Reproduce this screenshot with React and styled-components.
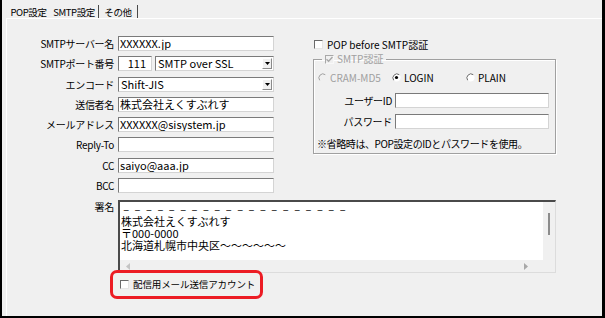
import React from "react"
import styled, { createGlobalStyle } from "styled-components"

var GlobalStyle = createGlobalStyle`
html, body {
margin: 0;
padding: 0;
background: #f0f0f0;
}
`

var UI_FONT = `"Noto Sans CJK JP", "Noto Sans", sans-serif`

var Check = ({ checked, disabled }) => (
  <CheckBox $disabled={disabled}>
    {checked &&
      <svg width="7" height="7" viewBox="0 0 7 7">
        <path d="M0.5 3.2 L2.6 5.3 L6.5 1" fill="none" stroke={disabled ? "#a8a8a8" : "#000"} strokeWidth="1.4" />
      </svg>
    }
  </CheckBox>
)

var Radio = ({ checked, disabled }) => (
  <svg width="9" height="9" viewBox="0 0 9 9" style={{ flex: "none" }}>
    <circle cx="4.5" cy="4.5" r="4" fill={disabled ? "#f0f0f0" : "#fff"} />
    <path d="M1.7 7.3 A4 4 0 0 1 7.3 1.7" fill="none" stroke={disabled ? "#a0a0a0" : "#6a6a6a"} strokeWidth="1" />
    {checked && <circle cx="4.5" cy="4.5" r="1.6" fill="#000" />}
  </svg>
)

var Dropdown = ({ value, width }) => (
  <Select $w={width}>
    <span>{value}</span>
    <DropButton>
      <svg width="5" height="3" viewBox="0 0 5 3">
        <path d="M0 0 H5 L2.5 3 Z" fill="#000" />
      </svg>
    </DropButton>
  </Select>
)

var rows = [
  { label: "SMTPサーバー名", value: "XXXXXX.jp" },
  { label: "SMTPポート番号", port: true },
  { label: "エンコード", select: "Shift-JIS" },
  { label: "送信者名", value: "株式会社えくすぶれす" },
  { label: "メールアドレス", value: "XXXXXX@sisystem.jp" },
  { label: "Reply-To", value: "" },
  { label: "CC", value: "saiyo@aaa.jp" },
  { label: "BCC", value: "" },
]

var signature = [
  "\u2009" + "–\u2002".repeat(20),
  "株式会社えくすぶれす",
  "〒000-0000",
  "北海道札幌市中央区～～～～～～",
]

var App = () => (
  <Frame>
    <GlobalStyle />
    <TabStrip>
      <Tab $w={42}>POP設定</Tab>
      <Tab $w={49} $edge>SMTP設定</Tab>
      <Tab $w={39} $edge>その他</Tab>
    </TabStrip>

    <Panel>
      <Top>
        <LeftForm>
          {rows.map((row) => (
            <React.Fragment key={row.label}>
              <Label>{row.label}</Label>
              {row.port
                ? <PortRow>
                    <Field $w={34} $align="right">111</Field>
                    <Dropdown value="SMTP over SSL" width={119} />
                  </PortRow>
                : row.select
                ? <Dropdown value={row.select} width={156} />
                : <Field $w={156}>{row.value}</Field>
              }
            </React.Fragment>
          ))}
        </LeftForm>

        <RightSide>
          <CheckRow>
            <Check />
            <span>POP before SMTP認証</span>
          </CheckRow>

          <Group>
            <Legend>
              <Check checked disabled />
              <span>SMTP認証</span>
            </Legend>

            <RadioRow>
              <RadioItem $disabled>
                <Radio disabled />
                <span>CRAM-MD5</span>
              </RadioItem>
              <RadioItem>
                <Radio checked />
                <span>LOGIN</span>
              </RadioItem>
              <RadioItem>
                <Radio />
                <span>PLAIN</span>
              </RadioItem>
            </RadioRow>

            <Credentials>
              <Label>ユーザーID</Label>
              <Field $w={154} />
              <Label>パスワード</Label>
              <Field $w={154} />
            </Credentials>

            <Note>※省略時は、POP設定のIDとパスワードを使用。</Note>
          </Group>
        </RightSide>
      </Top>

      <SignatureRow>
        <Label $top>署名</Label>
        <Memo>
          <MemoText>{signature.join("\n")}</MemoText>
          <VScroll><Thumb /></VScroll>
          <HScroll>
            <svg width="4" height="7" viewBox="0 0 4 7"><path d="M4 0 V7 L0 3.5 Z" fill="#c4c4c4" /></svg>
            <svg width="4" height="7" viewBox="0 0 4 7"><path d="M0 0 V7 L4 3.5 Z" fill="#a8a8a8" /></svg>
          </HScroll>
          <Corner />
        </Memo>
      </SignatureRow>

      <Highlight>
        <CheckRow $small>
          <Check />
          <span>配信用メール送信アカウント</span>
        </CheckRow>
      </Highlight>
    </Panel>
  </Frame>
)

var Frame = styled.div`
width: 605px;
height: 318px;
box-sizing: border-box;
border-left: 2px solid #000;
border-right: 3px solid #000;
border-bottom: 2px solid #000;
background: #f0f0f0;
overflow: hidden;
display: flex;
flex-direction: column;
font-family: ${UI_FONT};
color: #000;
`

var TabStrip = styled.div`
display: flex;
align-items: flex-end;
height: 18px;
padding-left: 6px;
`

var Tab = styled.div`
width: ${(p) => p.$w}px;
height: 14px;
box-sizing: border-box;
display: flex;
align-items: center;
justify-content: center;
font-size: 9.5px;
letter-spacing: -0.4px;
line-height: 12px;
white-space: nowrap;
border-right: ${(p) => (p.$edge ? "1px solid #4a4a4a" : "1px solid transparent")};
margin-bottom: -1px;
`

var Panel = styled.div`
flex: 1;
margin-left: 4px;
border-top: 1px solid #fff;
border-left: 1px solid #fff;
padding-top: 17px;
display: flex;
flex-direction: column;
`

var Top = styled.div`
display: flex;
align-items: flex-start;
`

var LeftForm = styled.div`
display: grid;
grid-template-columns: 107px 156px;
grid-auto-rows: 15px;
column-gap: 4px;
row-gap: 5.3px;
`

var Label = styled.div`
font-size: 10px;
line-height: ${(p) => (p.$top ? "12px" : "15px")};
text-align: right;
white-space: nowrap;
letter-spacing: -0.3px;
`

var Field = styled.div`
width: ${(p) => p.$w}px;
height: 15px;
box-sizing: border-box;
border: 1px solid;
border-color: #7a7a7a #d4d4d4 #d4d4d4 #7a7a7a;
background: #fff;
font-size: 11px;
line-height: 13px;
padding: 0 ${(p) => (p.$align === "right" ? "5px" : "1px")};
text-align: ${(p) => p.$align || "left"};
white-space: nowrap;
overflow: hidden;
`

var PortRow = styled.div`
display: flex;
gap: 3px;
`

var Select = styled(Field)`
width: ${(p) => p.$w}px;
display: flex;
align-items: center;
justify-content: space-between;
padding: 0 1px 0 2px;
`

var DropButton = styled.div`
width: 10px;
height: 11px;
box-sizing: border-box;
border: 1px solid;
border-color: #fff #8a8a8a #8a8a8a #fff;
background: #f0f0f0;
display: flex;
align-items: center;
justify-content: center;
`

var RightSide = styled.div`
margin-left: 39px;
padding-top: 3px;
display: flex;
flex-direction: column;
`

var CheckRow = styled.div`
display: flex;
align-items: center;
gap: 4px;
height: 11px;
font-size: ${(p) => (p.$small ? "9.5px" : "10px")};
letter-spacing: ${(p) => (p.$small ? "-0.1px" : "0")};
line-height: 11px;
white-space: nowrap;
padding-left: 1px;
`

var CheckBox = styled.span`
flex: none;
width: 9px;
height: 9px;
box-sizing: border-box;
border: 1px solid;
border-color: ${(p) => (p.$disabled ? "#a8a8a8 #f8f8f8 #f8f8f8 #a8a8a8" : "#6a6a6a #e6e6e6 #e6e6e6 #6a6a6a")};
background: ${(p) => (p.$disabled ? "#f0f0f0" : "#fff")};
display: flex;
align-items: center;
justify-content: center;
`

var Group = styled.fieldset`
margin: 3px 0 0 0;
width: 243px;
box-sizing: border-box;
border: 1px solid #a0a0a0;
box-shadow: inset 1px 1px 0 #fff, 1px 1px 0 #fff;
padding: 0 6px 4px 3px;
`

var Legend = styled.legend`
display: flex;
align-items: center;
gap: 3px;
margin-left: 5px;
padding: 0 3px 0 3px;
font-size: 10px;
line-height: 12px;
color: #a0a0a0;
`

var RadioRow = styled.div`
display: grid;
grid-template-columns: 74px 74px auto;
margin-top: 7px;
padding-left: 1px;
`

var RadioItem = styled.div`
display: flex;
align-items: center;
gap: 3px;
font-size: 10px;
line-height: 11px;
color: ${(p) => (p.$disabled ? "#a0a0a0" : "#000")};
`

var Credentials = styled.div`
display: grid;
grid-template-columns: 75px 154px;
grid-auto-rows: 15px;
column-gap: 3px;
row-gap: 6px;
margin-top: 10px;
`

var Note = styled.div`
margin-top: 9px;
font-size: 10px;
line-height: 11px;
white-space: nowrap;
letter-spacing: -0.4px;
`

var SignatureRow = styled.div`
display: flex;
gap: 4px;
margin-top: 7px;

& > ${Label} {
width: 107px;
padding-top: 1px;
}
`

var Memo = styled.div`
width: 438px;
height: 73px;
box-sizing: border-box;
border: 2px solid;
border-color: #4a4a4a #dcdcdc #dcdcdc #4a4a4a;
border-right-width: 1px;
border-bottom-width: 1px;
background: #f0f0f0;
display: grid;
grid-template-columns: 1fr 12px;
grid-template-rows: 1fr 12px;
`

var MemoText = styled.pre`
margin: 0;
background: #fff;
font-family: ${UI_FONT};
font-size: 11px;
line-height: 12px;
padding: 1px 0 0 1px;
overflow: hidden;
white-space: pre;
`

var VScroll = styled.div`
display: flex;
justify-content: center;
padding-top: 11px;
`

var Thumb = styled.div`
width: 2px;
height: 22px;
background: #8c8c8c;
`

var HScroll = styled.div`
display: flex;
align-items: center;
justify-content: space-between;
padding: 0 15px 0 6px;
`

var Corner = styled.div``

var Highlight = styled.div`
margin: -3px 0 0 103px;
width: 153px;
height: 29px;
box-sizing: border-box;
border: 3px solid #ec1c24;
border-radius: 7px;
display: flex;
align-items: center;
padding-left: 6px;
`

export default App
